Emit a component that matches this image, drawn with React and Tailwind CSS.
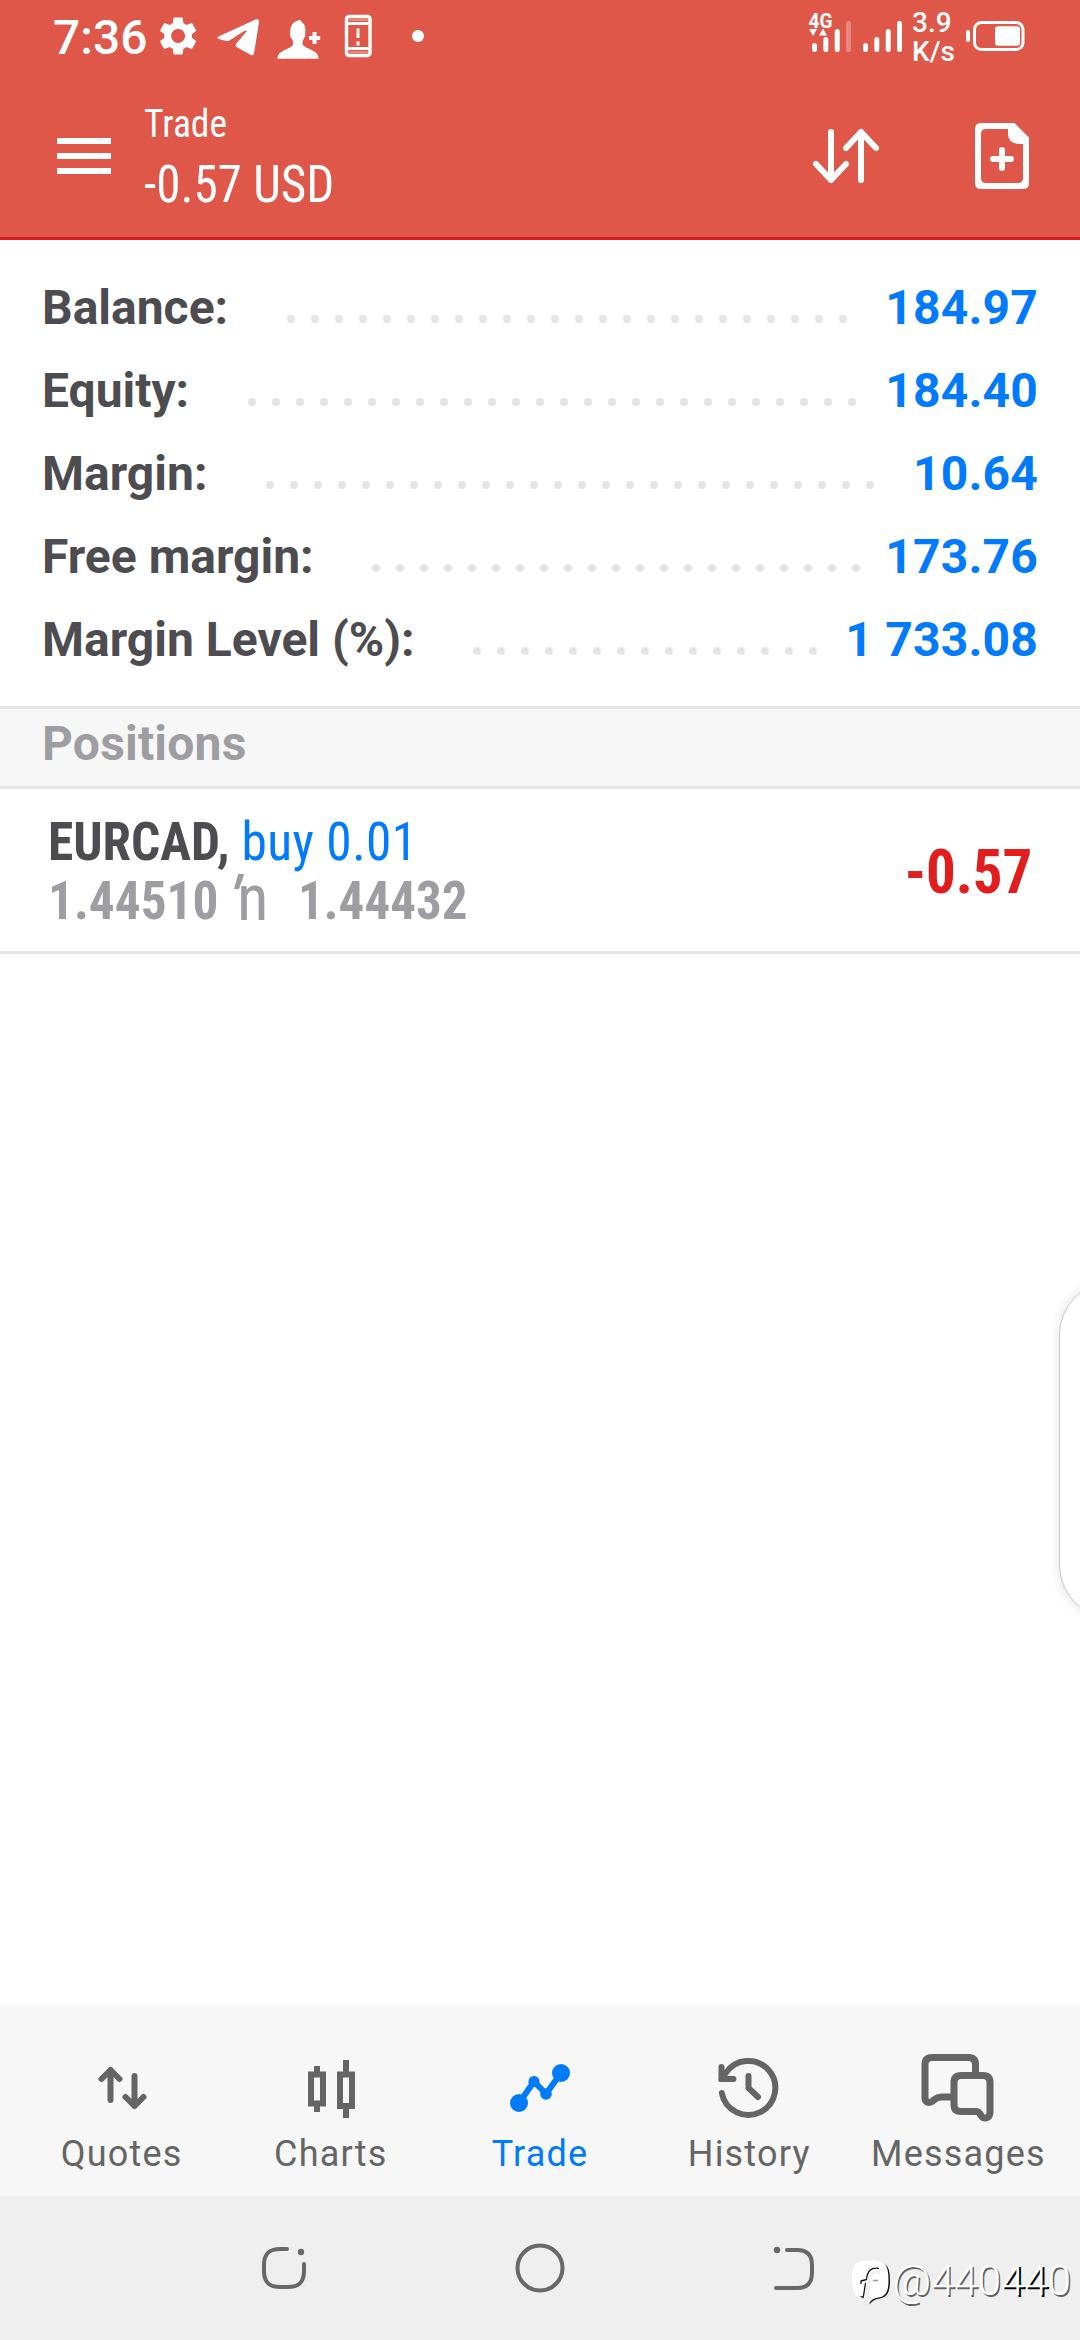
const Icon = ({ x, y, w, h, className = "", children }) => (
  <svg width={w} height={h} viewBox={`${x} ${y} ${w} ${h}`} className={`shrink-0 ${className}`} fill="none" strokeLinecap="round" strokeLinejoin="round">
    {children}
  </svg>
);

function StatusBar() {
  return (
    <div className="flex h-[75px] items-start text-white">
      <span className="mt-[8px] ml-[53px] w-[103px] text-[48px] leading-[60px] font-medium whitespace-nowrap">7:36</span>
      <Icon x={156} y={0} w={44} h={72}>
        <g transform="translate(155 12.9) scale(1.925)">
          <path fill="#fff" d="M19.14 12.94c.04-.3.06-.61.06-.94 0-.32-.02-.64-.07-.94l2.03-1.58a.49.49 0 0 0 .12-.61l-1.92-3.32a.488.488 0 0 0-.59-.22l-2.39.96c-.5-.38-1.03-.7-1.62-.94l-.36-2.54a.484.484 0 0 0-.48-.41h-3.84c-.24 0-.43.17-.47.41l-.36 2.54c-.59.24-1.13.57-1.62.94l-2.39-.96c-.22-.08-.47 0-.59.22L2.74 8.87c-.12.21-.08.47.12.61l2.03 1.58c-.05.3-.09.63-.09.94s.02.64.07.94l-2.03 1.58a.49.49 0 0 0-.12.61l1.92 3.32c.12.22.37.29.59.22l2.39-.96c.5.38 1.03.7 1.62.94l.36 2.54c.05.24.24.41.48.41h3.84c.24 0 .44-.17.47-.41l.36-2.54c.59-.24 1.13-.56 1.62-.94l2.39.96c.22.08.47 0 .59-.22l1.92-3.32c.12-.22.07-.47-.12-.61l-2.01-1.58zM12 15.6c-1.98 0-3.6-1.62-3.6-3.6s1.62-3.6 3.6-3.6 3.6 1.62 3.6 3.6-1.62 3.6-3.6 3.6z" />
        </g>
      </Icon>
      <Icon x={215} y={0} w={46} h={72} className="ml-[15px]">
        <path fill="#fff" d="M219 36.2L255.5 19.6Q259.4 18.4 259 22.2L254 53.5Q253 56.4 250.3 54.7L236.5 47Q234.8 45.6 236.3 43.6L246.3 31.8Q247.3 30 245 30.6L229.5 40.4Q227.5 41.6 225.2 40.8L218.5 39Q216 37.8 219 36.2Z" />
      </Icon>
      <Icon x={275} y={0} w={47} h={72} className="ml-[14px]">
        <path fill="#fff" d="M277.5 58.7C277.5 50.5 288 50 292.5 45.5C294.2 43 292.5 40.5 291.6 38.5Q289.5 36.5 290.3 32.5C289.8 25.5 293.3 21 300.3 20L302.3 22.5C305 24.5 305.8 28 305.3 32.5Q305.8 36.5 303.8 38.5C303 41 301.5 43.5 303.5 45.5C308 50 318.5 50 318.7 58.7Z" />
        <path stroke="#fff" strokeWidth="4" strokeLinecap="butt" d="M309 38H320.2M314.5 32V44" />
      </Icon>
      <Icon x={343} y={0} w={31} h={72} className="ml-[21px]">
        <rect x="346.5" y="16.5" width="23.5" height="39" rx="2.5" stroke="#fff" strokeWidth="3.4" />
        <path stroke="#fff" strokeWidth="2" opacity=".3" d="M350 20H367M350 52H367" />
        <path stroke="#fff" strokeWidth="3" strokeLinecap="butt" d="M347 23.5H370M347 48.5H370M358 28.5V38M358 41.5V45.5" />
      </Icon>
      <Icon x={408} y={0} w={20} h={72} className="ml-[34px]">
        <circle cx="418" cy="36" r="6" fill="#fff" />
      </Icon>
      <Icon x={806} y={0} w={100} h={72} className="ml-auto">
        <text x="808.5" y="28" textLength="24" lengthAdjust="spacingAndGlyphs" fill="#fff" className="text-[21px] font-bold">4G</text>
        <path fill="#fff" d="M809 29h8l-4 7zM819 35.5h8l-4-7z" />
        <path stroke="#fff" strokeWidth="5" d="M814.5 45.5V49.5M825.8 39.5V49.5M837.2 31.5V49.5M865.5 45.5V49.5M876.8 39.5V49.5M888.2 31.5V49.5M899.5 23.5V49.5" />
        <path stroke="#fff" strokeWidth="5" opacity=".3" d="M848.5 23.5V49.5" />
      </Icon>
      <div className="mt-[9px] ml-[6px] w-[50px] text-[28px] leading-[28.5px] font-medium">
        <div>3.9</div>
        <div>K/s</div>
      </div>
      <Icon x={962} y={0} w={66} h={72} className="mr-[52px]">
        <path stroke="#fff" strokeWidth="4" d="M968 32V40" />
        <rect x="974.5" y="22.5" width="48.5" height="27" rx="7" stroke="#fff" strokeWidth="3" />
        <rect x="995" y="26.3" width="25" height="19.5" rx="3" fill="#fff" />
      </Icon>
    </div>
  );
}

function AppBar() {
  return (
    <div className="flex h-[162px] items-center text-white">
      <div className="ml-[57px] flex w-[54px] flex-col gap-[9px]">
        <div className="h-[6px] bg-white" />
        <div className="h-[6px] bg-white" />
        <div className="h-[6px] bg-white" />
      </div>
      <div className="ml-[33px] origin-left scale-x-[0.963] pb-[2px] font-['Roboto_Condensed'] whitespace-nowrap">
        <div className="text-[39px] leading-[60px]">Trade</div>
        <div className="text-[51px] leading-[62px]">-0.57 USD</div>
      </div>
      <Icon x={810} y={120} w={72} h={72} className="ml-auto">
        <path stroke="#fff" strokeWidth="6" d="M831 132V180M816 164L831 180L846 164M861 180V132M846 148L861 132L876 148" />
      </Icon>
      <Icon x={972} y={120} w={60} h={72} className="mr-[48px] ml-[90px]">
        <path fill="#fff" fillRule="evenodd" d="M981 123H1014.5L1029 137.5V183Q1029 189 1023 189H981Q975 189 975 183V129Q975 123 981 123ZM986 129Q981 129 981 134V178Q981 183 986 183H1018Q1023 183 1023 178V144H1018.5Q1008 143 1008 134V129Z" />
        <path stroke="#fff" strokeWidth="6" d="M993 159H1011M1002 150V168" />
      </Icon>
    </div>
  );
}

const summary = [
  { label: "Balance:", value: "184.97", dots: 24, width: "w-[242px]" },
  { label: "Equity:", value: "184.40", dots: 26, width: "w-[203px]" },
  { label: "Margin:", value: "10.64", dots: 26, width: "w-[221px]" },
  { label: "Free margin:", value: "173.76", dots: 21, width: "w-[327px]" },
  { label: "Margin Level (%):", value: "1 733.08", dots: 15, width: "w-[428px]" },
];

function Summary() {
  return (
    <div className="flex flex-col px-[42px] pt-[26px] pb-[25px] text-[48px] font-bold">
      {summary.map((r) => (
        <div key={r.label} className="flex h-[83px] items-center leading-[83px] whitespace-nowrap">
          <span className={`shrink-0 text-[#4d4c51] ${r.width}`}>{r.label}</span>
          <span className="mt-[22px] ml-[3px] flex gap-[16px]">
            {Array.from({ length: r.dots }, (_, i) => (
              <i key={i} className="size-[8px] rounded-full bg-[#e4e4e4]" />
            ))}
          </span>
          <span className="ml-auto tracking-[0.2px] text-[#007aff]">{r.value}</span>
        </div>
      ))}
    </div>
  );
}

function Positions() {
  return (
    <>
      <div className="h-[83px] border-y-[3px] border-[#e4e4e4] bg-[#f7f7f7] pl-[42px] text-[48px] leading-[69px] font-bold tracking-[0.2px] text-[#9d9da2]">Positions</div>
      <div className="flex h-[165px] justify-between border-b-[3px] border-[#e4e4e4] pr-[48px] pl-[48px] font-['Roboto_Condensed'] font-bold">
        <div className="pt-[23px] text-[54px] leading-[59px] whitespace-pre">
          <div className="h-[59px] w-[420px] origin-left scale-x-[0.952] text-[#4d4c51]">EURCAD, <span className="font-normal tracking-[0.4px] text-[#007aff]">buy 0.01</span></div>
          <div className="flex h-[59px] text-[#9d9da2]">
            <span className="w-[181px] origin-left scale-x-[0.95]">1.44510</span>
            <span className="w-[8px] -skew-x-[16deg] font-['Roboto'] text-[56px] leading-[53px]">′</span>
            <span className="w-[61px] text-[65px] leading-[55px] font-normal">n</span>
            <span className="origin-left scale-x-[0.945]">1.44432</span>
          </div>
        </div>
        <div className="origin-right scale-x-[0.95] pt-[3px] text-[62px] leading-[160px] text-[#e21d1d]">-0.57</div>
      </div>
    </>
  );
}

const tabs = [
  {
    label: "Quotes",
    x: 81.5,
    art: <path stroke="currentColor" strokeWidth="6" d="M110 2070V2100M101 2079L110 2070L119 2079M134 2076V2106M125 2097L134 2106L143 2097" />,
  },
  {
    label: "Charts",
    x: 290.5,
    art: <path stroke="currentColor" strokeWidth="6" strokeLinecap="butt" strokeLinejoin="miter" d="M310.5 2074.5H322.5V2103.5H310.5ZM316.5 2066V2073M316.5 2105V2112M339.5 2074.5H351.5V2106H339.5ZM345.5 2060V2073M345.5 2108V2118" />,
  },
  {
    label: "Trade",
    x: 500,
    active: true,
    art: (
      <>
        <path stroke="currentColor" strokeWidth="6" d="M519 2103L534 2081.5L546 2094L561 2073" />
        <g fill="currentColor">
          <circle cx="519" cy="2103" r="9" />
          <circle cx="534" cy="2081.5" r="5.5" />
          <circle cx="546" cy="2094" r="5.8" />
          <circle cx="561" cy="2073" r="9" />
        </g>
      </>
    ),
  },
  {
    label: "History",
    x: 709.5,
    art: (
      <>
        <path stroke="currentColor" strokeWidth="6" d="M722.3 2093A27 27 0 1 0 726 2073.5M722 2067V2079H734M749 2076V2088L758.5 2097" />
        <path fill="currentColor" d="M719 2079H724V2082H720.5Q719 2082 719 2080.5Z" />
      </>
    ),
  },
  {
    label: "Messages",
    x: 918.5,
    art: (
      <path stroke="currentColor" strokeWidth="7" d="M976 2073V2064.5Q976 2057.5 969 2057.5H932.5Q925.5 2057.5 925.5 2064.5V2098C925.5 2102 929 2103.5 932.5 2101.5C936 2099 937 2097 941.5 2097H953M961.5 2075.5H983.5Q990.5 2075.5 990.5 2082.5V2112C990.5 2119 984 2119.5 981.5 2115.5C979.5 2112.5 979.5 2111.5 975.5 2111.5H961.5Q954.5 2111.5 954.5 2104.5V2082.5Q954.5 2075.5 961.5 2075.5Z" />
    ),
  },
];

function TabBar() {
  return (
    <div className="flex h-[190px] shrink-0 bg-[#f7f7f7] px-[17px] pt-[42px] shadow-[0_-1px_3px_rgba(0,0,0,0.03)]">
      {tabs.map((t) => (
        <div key={t.label} className={`flex flex-1 flex-col items-center ${t.active ? "text-[#007aff]" : "text-[#656565]"}`}>
          <Icon x={t.x} y={2048} w={80} h={76}>{t.art}</Icon>
          <span className="mt-[8px] text-[36px] leading-[44px] tracking-[1.2px] whitespace-nowrap">{t.label}</span>
        </div>
      ))}
    </div>
  );
}

function Watermark() {
  return (
    <div className="absolute right-[9px] bottom-[33px] flex items-start">
      <Icon x={850} y={2258} w={43} h={50} className="mt-[1px]">
        <path fill="#111" d="M870 2262.5C886 2262.5 890 2266 890 2281C890 2294 887 2299 877 2300Q872 2301.5 869.5 2305.5V2299Z" />
        <path fill="#fff" d="M870.5 2261.5C885 2261.5 888.5 2265.5 888.5 2280.5C888.5 2294 885.5 2298 876 2299Q871.5 2300 869 2304.5L868 2299.5C855 2299.5 852 2294 852 2280.5C852 2265.5 855 2261.5 870.5 2261.5Z" />
        <path stroke="#f1f1f1" strokeWidth="4" d="M879.5 2273C873 2272 871 2274.5 870 2280L867 2298" />
        <path stroke="#111" strokeWidth="1.3" d="M878.5 2269.3C871 2268.5 867.5 2271.5 866.5 2280.5L861 2282V2284.5M865.5 2284.5L863.2 2298.5L861 2297.5" />
        <path stroke="#999" strokeWidth="1.3" d="M873.5 2281.5H877.5" />
      </Icon>
      <span className="text-[42px] leading-[49px] font-light whitespace-nowrap text-white [text-shadow:1.5px_1.5px_0.5px_rgba(0,0,0,0.6)]">
        @440<span className="[text-shadow:2px_1.5px_0_#000]">44</span>0
      </span>
    </div>
  );
}

function SystemNav() {
  return (
    <div className="relative flex h-[144px] shrink-0 items-center gap-[204px] bg-[#efefef] pl-[258px] text-[#686868]">
      <Icon x={258} y={2238} w={52} h={60}>
        <path stroke="currentColor" strokeWidth="4" d="M287 2249H280C269 2249 264 2254 264 2265V2271C264 2282 269 2287 280 2287H288C299 2287 304 2282 304 2271V2264" />
        <circle cx="301" cy="2252" r="3.2" fill="currentColor" />
      </Icon>
      <Icon x={514} y={2238} w={52} h={60}>
        <circle cx="540" cy="2268" r="22.5" stroke="currentColor" strokeWidth="4" />
      </Icon>
      <Icon x={770} y={2238} w={52} h={60}>
        <path stroke="currentColor" strokeWidth="4" d="M787 2250H797C808 2250 812 2256 812 2265V2273C812 2282 808 2288 797 2288H776" />
        <circle cx="777" cy="2250" r="3.2" fill="currentColor" />
      </Icon>
      <Watermark />
    </div>
  );
}

export default function App() {
  return (
    <div className="relative flex h-[2340px] w-[1080px] flex-col overflow-hidden bg-white font-['Roboto',sans-serif]">
      <header className="h-[240px] shrink-0 border-b-[3px] border-[#da1a1d] bg-[#df5749]">
        <StatusBar />
        <AppBar />
      </header>
      <main className="flex-1">
        <Summary />
        <Positions />
      </main>
      <TabBar />
      <SystemNav />
      <div className="absolute top-[1281px] -right-[109px] h-[338px] w-[130px] rounded-[54px] border border-[#c8c8c8] bg-white shadow-[0_0_12px_rgba(0,0,0,0.12)]" />
    </div>
  );
}
